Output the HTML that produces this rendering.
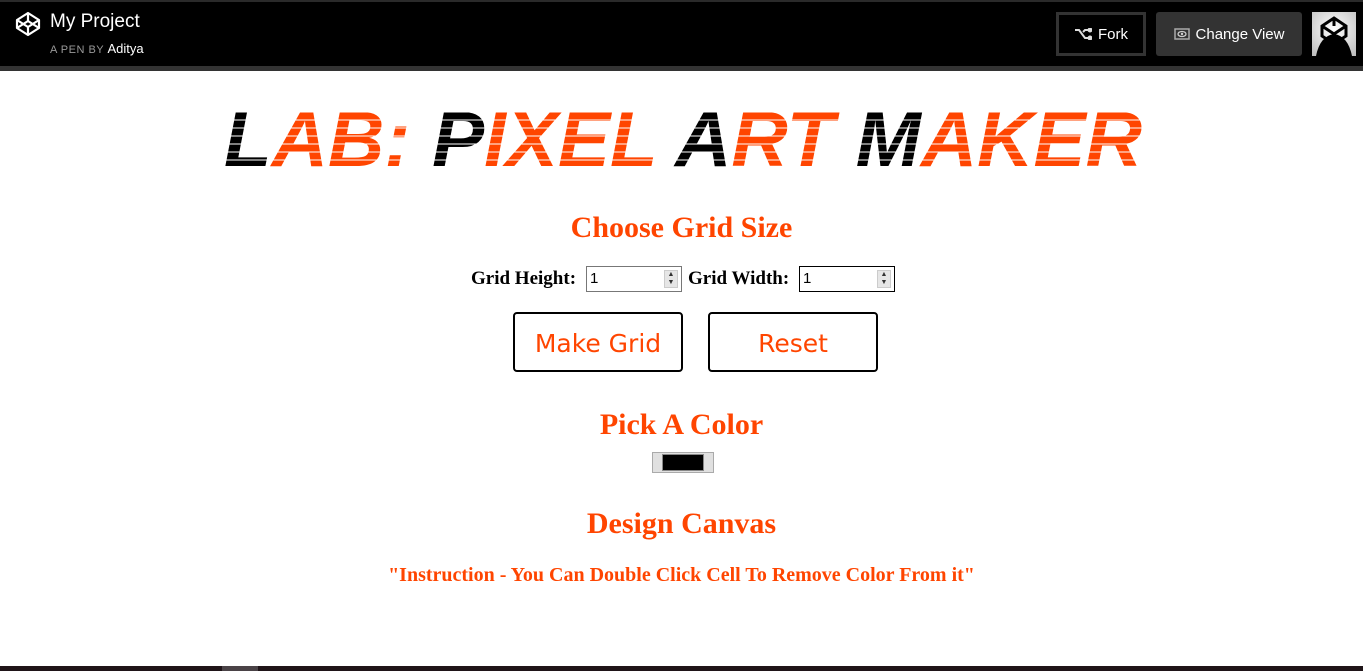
<!DOCTYPE html>
<html><head><style>
*{margin:0;padding:0;box-sizing:border-box}
body{width:1363px;height:671px;overflow:hidden;background:#fff;font-family:"Liberation Serif",serif;position:relative}
.hdr{position:absolute;left:0;top:0;width:1363px;height:66px;background:#000;border-top:2px solid #2a2a2a}
.bar{position:absolute;left:0;top:66px;width:1363px;height:5px;background:#333}
.logo{position:absolute;left:15px;top:11px}
.t1{position:absolute;left:50px;top:11px;color:#fff;font:19px "Liberation Sans",sans-serif}
.t2{position:absolute;left:50px;top:41px;color:#999;font:11px "Liberation Sans",sans-serif;letter-spacing:.5px}
.t2 b{color:#fff;font-weight:normal;font-size:13px;letter-spacing:0}
.fork{position:absolute;left:1056px;top:12px;width:90px;height:44px;border:3px solid #333;color:#fff;font:15px "Liberation Sans",sans-serif;display:flex;align-items:center;justify-content:center;gap:6px}
.cv{position:absolute;left:1156px;top:12px;width:146px;height:44px;background:#333;border-radius:3px;color:#fff;font:15px "Liberation Sans",sans-serif;display:flex;align-items:center;justify-content:center;gap:6px}
.av{position:absolute;left:1312px;top:12px;width:44px;height:44px;background:radial-gradient(circle at 50% 40%,#fff,#bbb);overflow:hidden}
.or{color:#ff4500;font-weight:bold;text-align:center;position:absolute;left:0;width:1363px}
.lbl{position:absolute;top:268px;font-weight:bold;font-size:19px}
.inp{position:absolute;top:266px;height:26px;width:96px;border:1px solid #777;font:15px "Liberation Sans",sans-serif;padding:3px 3px}
.spin{position:absolute;right:3px;top:3px;width:14px;height:18px;background:#e6e6e6;border:1px solid #ccc;font-size:7px;line-height:8px;text-align:center;color:#333}
.btn{position:absolute;top:312px;width:170px;height:60px;border:2px solid #000;border-radius:4px;color:#ff4500;font:25px "DejaVu Sans",sans-serif;display:flex;align-items:center;justify-content:center;padding-top:3px}
.foot{position:absolute;left:0;top:666px;width:1363px;height:5px;background:#1f1418}
</style></head><body>
<div class="hdr"></div><div class="bar"></div>
<svg class="logo" width="26" height="26" viewBox="0 0 26 26" fill="none" stroke="#fff" stroke-width="2.2" stroke-linejoin="round"><path d="M13 2L24 9V17L13 24L2 17V9Z M2 9L13 16L24 9 M2 17L13 10L24 17 M13 2V10 M13 16V24"/></svg>
<div class="t1">My Project</div>
<div class="t2">A PEN BY <b>Aditya</b></div>
<div class="fork"><svg width="18" height="12" viewBox="0 0 18 12" stroke="#ddd" stroke-width="2" fill="none"><path d="M1 2H5L11 10H15M9 4L11 2H15"/><circle cx="16" cy="2" r="1.5" fill="#ddd"/><circle cx="16" cy="10" r="1.5" fill="#ddd"/></svg>Fork</div>
<div class="cv"><svg width="16" height="12" viewBox="0 0 16 12"><rect x="1" y="1" width="14" height="10" fill="none" stroke="#aaa" stroke-width="1.5"/><ellipse cx="8" cy="6" rx="4" ry="2.5" fill="none" stroke="#ccc" stroke-width="1.3"/><circle cx="8" cy="6" r="1.2" fill="#ccc"/></svg>Change View</div>
<div class="av"><svg width="44" height="44" viewBox="0 0 44 44"><path d="M4 44Q8 24 22 22Q36 24 40 44Z" fill="#000"/><path d="M22 6L34 14V24L22 32L10 24V14Z M10 14L22 22L34 14 M22 6V14" fill="none" stroke="#000" stroke-width="3"/></svg></div>

<svg style="position:absolute;left:224px;top:100px" width="920" height="72">
<defs>
<pattern id="po" width="8" height="8" patternUnits="userSpaceOnUse"><rect width="8" height="8" fill="#ff4500"/><rect y="3.5" width="8" height="1" fill="#fff"/></pattern>
<pattern id="pb" width="8" height="8" patternUnits="userSpaceOnUse"><rect width="8" height="8" fill="#000"/><rect y="3.5" width="8" height="1" fill="#fff"/></pattern>
</defs>
<text x="0" y="66" textLength="918" lengthAdjust="spacingAndGlyphs" font-family="Liberation Sans" font-weight="bold" font-size="78" font-style="italic" fill="url(#po)"><tspan fill="url(#pb)">L</tspan>AB: <tspan fill="url(#pb)">P</tspan>IXEL <tspan fill="url(#pb)">A</tspan>RT <tspan fill="url(#pb)">M</tspan>AKER</text>
</svg>

<div class="or" style="top:211px;font-size:30px">Choose Grid Size</div>
<div class="lbl" style="left:471px">Grid Height:</div>
<div class="inp" style="left:586px">1<div class="spin">▲<br>▼</div></div>
<div class="lbl" style="left:688px">Grid Width:</div>
<div class="inp" style="left:799px;border-color:#000">1<div class="spin">▲<br>▼</div></div>
<div class="btn" style="left:513px">Make Grid</div>
<div class="btn" style="left:708px">Reset</div>
<div class="or" style="top:408px;font-size:30px">Pick A Color</div>
<div style="position:absolute;left:652px;top:452px;width:62px;height:21px;background:#e0e0e0;border:1px solid #aaa"><div style="position:absolute;left:9px;top:1px;width:42px;height:17px;background:#000;border:1px solid #888"></div></div>
<div class="or" style="top:507px;font-size:30px">Design Canvas</div>
<div class="or" style="top:564px;font-size:20px">"Instruction - You Can Double Click Cell To Remove Color From it"</div>
<div class="foot"></div>
<div style="position:absolute;left:222px;top:666px;width:36px;height:5px;background:#4a4246"></div>
</body></html>
